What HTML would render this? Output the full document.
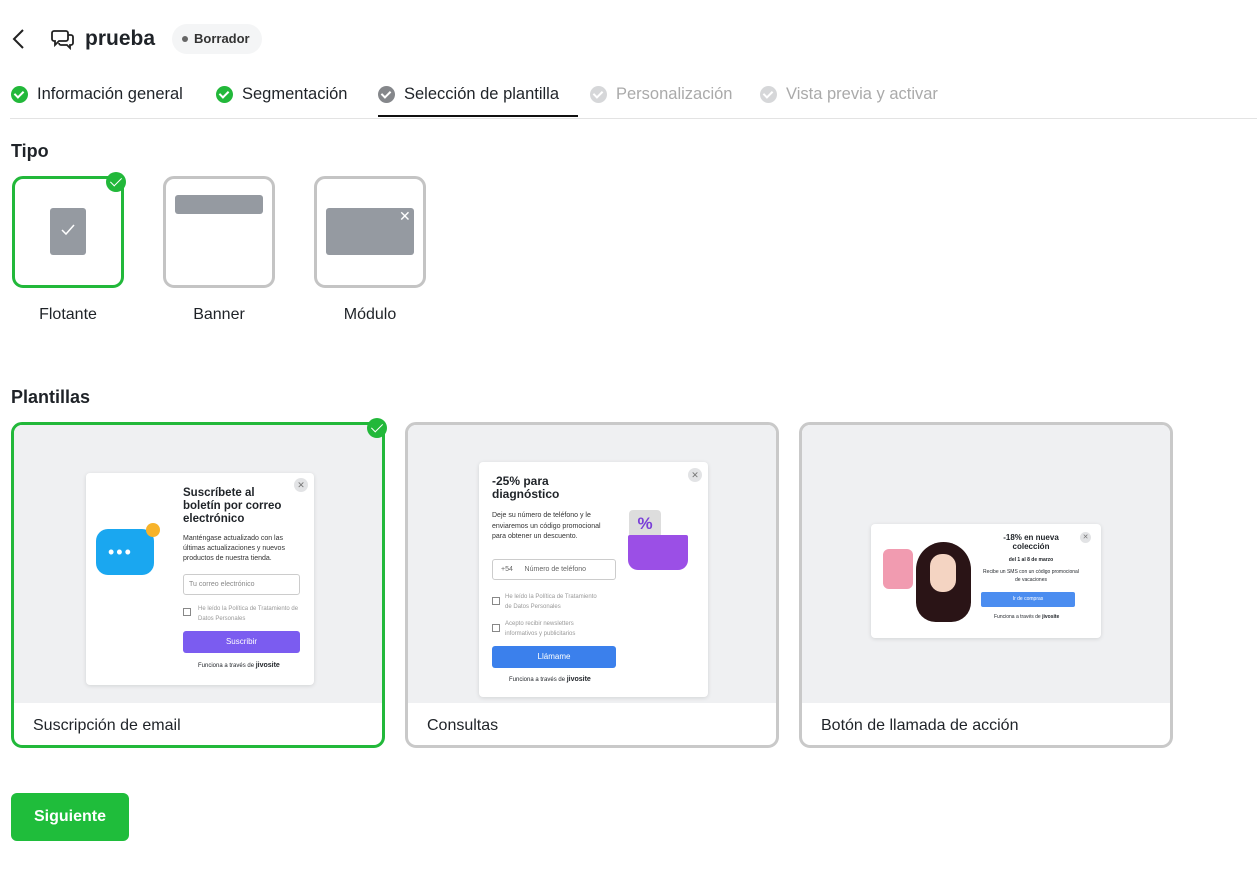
<!DOCTYPE html>
<html><head><meta charset="utf-8"><style>
*{box-sizing:border-box;margin:0;padding:0}
body{width:1257px;height:879px;background:#fff;font-family:"Liberation Sans",sans-serif;color:#1f2328;position:relative;overflow:hidden}
.a{position:absolute}
.tab{position:absolute;top:85px;font-size:16.5px;display:flex;align-items:center;gap:9px;white-space:nowrap}
.ck{width:17px;height:17px;border-radius:50%;display:inline-block;position:relative}
.ck::after{content:"";position:absolute;left:5px;top:3px;width:4px;height:7px;border:solid #fff;border-width:0 2px 2px 0;transform:rotate(45deg)}
.tcard{position:absolute;top:176px;width:112px;height:112px;border:3px solid #c4c4c4;border-radius:11px}
.tl{position:absolute;top:305px;font-size:16px;width:112px;text-align:center}
.pc{position:absolute;top:422px;height:326px;width:374px;border:3px solid #c9c9c9;border-radius:11px;overflow:hidden}
.pc .img{position:absolute;left:0;top:0;right:0;height:278px;background:#eff0f2}
.pc .cap{position:absolute;left:19px;top:292px;font-size:16px}
.pop{position:absolute;background:#fff;border-radius:4px;box-shadow:0 1px 4px rgba(0,0,0,.12)}
.x{position:absolute;width:14px;height:14px;border-radius:50%;background:#e2e3e5;color:#777;font-size:9px;text-align:center;line-height:14px}
.sm{font-size:7px;line-height:10px;color:#333}
.badge{position:absolute;width:20px;height:20px;border-radius:50%;background:#22b83a}
.badge::after{content:"";position:absolute;left:7px;top:3px;width:5px;height:10px;border:solid #fff;border-width:0 1.5px 1.5px 0;transform:rotate(45deg)}
</style></head><body>
<svg class="a" style="left:10px;top:28px" width="16" height="22" viewBox="0 0 16 22"><path d="M13 2 L4 11 L13 20" fill="none" stroke="#222" stroke-width="2"/></svg>
<svg class="a" style="left:51px;top:28px" width="24" height="22" viewBox="0 0 24 22"><path d="M3 3h12a2 2 0 0 1 2 2v6a2 2 0 0 1-2 2H8l-4 4v-4H3a2 2 0 0 1-2-2V5a2 2 0 0 1 2-2z" fill="none" stroke="#222" stroke-width="1.8"/><path d="M17 7h3a2 2 0 0 1 2 2v6a2 2 0 0 1-2 2h-1v3l-3-3h-6a2 2 0 0 1-2-2" fill="none" stroke="#222" stroke-width="1.8"/></svg>
<div class="a" style="left:85px;top:27px;font-size:21px;font-weight:bold">prueba</div>
<div class="a" style="left:172px;top:24px;width:90px;height:30px;border-radius:15px;background:#f4f5f6;font-size:13px;font-weight:bold;color:#333;line-height:30px;padding-left:22px">Borrador<span class="a" style="left:10px;top:12px;width:6px;height:6px;border-radius:50%;background:#666"></span></div>

<div class="tab" style="left:11px"><span class="ck" style="background:#22b83a"></span>Información general</div>
<div class="tab" style="left:216px"><span class="ck" style="background:#22b83a"></span>Segmentación</div>
<div class="tab" style="left:378px"><span class="ck" style="background:#85878b"></span>Selección de plantilla</div>
<div class="tab" style="left:590px;color:#aaa"><span class="ck" style="background:#d6d7d9"></span>Personalización</div>
<div class="tab" style="left:760px;color:#aaa"><span class="ck" style="background:#d6d7d9"></span>Vista previa y activar</div>
<div class="a" style="left:10px;top:118px;width:1247px;height:1px;background:#e3e3e3"></div>
<div class="a" style="left:378px;top:115px;width:200px;height:2px;background:#111"></div>

<div class="a" style="left:11px;top:141px;font-size:18px;font-weight:bold">Tipo</div>
<div class="tcard" style="left:12px;border-color:#22b83a"><div class="a" style="left:35px;top:29px;width:36px;height:47px;background:#959aa1;border-radius:3px"></div><svg class="a" style="left:46px;top:45px" width="14" height="12"><path d="M1 6l4 4 8-9" fill="none" stroke="#fff" stroke-width="1.5"/></svg></div>
<div class="badge" style="left:106px;top:172px"></div>
<div class="tcard" style="left:163px"><div class="a" style="left:9px;top:16px;width:88px;height:19px;background:#959aa1;border-radius:3px"></div></div>
<div class="tcard" style="left:314px"><div class="a" style="left:9px;top:29px;width:88px;height:47px;background:#959aa1;border-radius:3px"></div><div class="a" style="left:82px;top:29px;color:#fff;font-size:14px">✕</div></div>
<div class="tl" style="left:12px;top:306px">Flotante</div>
<div class="tl" style="left:163px;top:306px">Banner</div>
<div class="tl" style="left:314px;top:306px">Módulo</div>

<div class="a" style="left:11px;top:387px;font-size:18px;font-weight:bold">Plantillas</div>

<div class="pc" style="left:11px;border-color:#22b83a"><div class="img">
 <div class="pop" style="left:72px;top:48px;width:228px;height:212px">
  <div class="x" style="left:208px;top:5px">✕</div>
  <div class="a" style="left:10px;top:56px;width:58px;height:46px;border-radius:12px;background:#1aa7f0"></div>
  <div class="a" style="left:60px;top:50px;width:14px;height:14px;border-radius:50%;background:#f7b32a"></div>
  <div class="a" style="left:22px;top:75px;color:#fff;font-size:18px;letter-spacing:2px;line-height:8px">•••</div>
  <div class="a" style="left:97px;top:14px;font-size:11.5px;font-weight:bold;line-height:13px;width:108px">Suscríbete al boletín por correo electrónico</div>
  <div class="a sm" style="left:97px;top:61px;width:122px">Manténgase actualizado con las últimas actualizaciones y nuevos productos de nuestra tienda.</div>
  <div class="a" style="left:97px;top:101px;width:117px;height:21px;border:1px solid #ccc;border-radius:3px;font-size:7px;color:#888;padding:6px 5px">Tu correo electrónico</div>
  <div class="a" style="left:97px;top:135px;width:8px;height:8px;border:1px solid #888"></div>
  <div class="a sm" style="left:112px;top:131px;color:#999;width:110px;font-size:6px;line-height:10px">He leído la Política de Tratamiento de Datos Personales</div>
  <div class="a" style="left:97px;top:158px;width:117px;height:22px;background:#7b5cf0;border-radius:3px;color:#fff;font-size:8px;text-align:center;line-height:22px">Suscribir</div>
  <div class="a" style="left:112px;top:189px;font-size:6px">Funciona a través de <b style="font-size:7px">jivosite</b></div>
 </div></div><div class="cap">Suscripción de email</div></div>
<div class="badge" style="left:367px;top:418px"></div>

<div class="pc" style="left:405px"><div class="img">
 <div class="pop" style="left:71px;top:37px;width:229px;height:235px">
  <div class="x" style="left:209px;top:6px">✕</div>
  <div class="a" style="left:13px;top:13px;font-size:12px;font-weight:bold;line-height:13px">-25% para<br>diagnóstico</div>
  <div class="a sm" style="left:13px;top:49px;width:120px;line-height:10.5px">Deje su número de teléfono y le enviaremos un código promocional para obtener un descuento.</div>
  <div class="a" style="left:150px;top:48px;width:32px;height:28px;background:#ddd;border-radius:4px;color:#7a3fd8;font-weight:bold;font-size:17px;text-align:center;line-height:28px">%</div>
  <div class="a" style="left:149px;top:73px;width:60px;height:35px;background:#9b4fe6;border-radius:2px 2px 10px 10px"></div>
  <div class="a" style="left:13px;top:97px;width:124px;height:21px;border:1px solid #ccc;border-radius:3px;font-size:7px;color:#666;padding:6px 8px">+54 &nbsp;&nbsp;&nbsp;&nbsp; Número de teléfono</div>
  <div class="a" style="left:13px;top:135px;width:8px;height:8px;border:1px solid #888"></div>
  <div class="a sm" style="left:26px;top:130px;color:#999;font-size:6px">He leído la Política de Tratamiento<br>de Datos Personales</div>
  <div class="a" style="left:13px;top:162px;width:8px;height:8px;border:1px solid #888"></div>
  <div class="a sm" style="left:26px;top:157px;color:#999;font-size:6px">Acepto recibir newsletters<br>informativos y publicitarios</div>
  <div class="a" style="left:13px;top:184px;width:124px;height:22px;background:#3b80ec;border-radius:3px;color:#fff;font-size:8px;text-align:center;line-height:22px">Llámame</div>
  <div class="a" style="left:30px;top:214px;font-size:6px">Funciona a través de <b style="font-size:7px">jivosite</b></div>
 </div></div><div class="cap">Consultas</div></div>

<div class="pc" style="left:799px"><div class="img">
 <div class="pop" style="left:69px;top:99px;width:230px;height:114px">
  <div class="x" style="left:209px;top:8px;width:11px;height:11px;line-height:11px;font-size:7px">✕</div>
  <div class="a" style="left:12px;top:25px;width:30px;height:40px;background:#f19bb0;border-radius:6px"></div>
  <div class="a" style="left:45px;top:18px;width:55px;height:80px;background:#2a1416;border-radius:28px 28px 20px 20px"></div>
  <div class="a" style="left:59px;top:30px;width:26px;height:38px;background:#f4d4c2;border-radius:12px"></div>
  <div class="a" style="left:115px;top:9px;width:90px;font-size:8px;font-weight:bold;text-align:center;line-height:9px">-18% en nueva colección</div>
  <div class="a" style="left:110px;top:33px;width:100px;font-size:5px;font-weight:bold;text-align:center">del 1 al 8 de marzo</div>
  <div class="a" style="left:110px;top:44px;width:100px;font-size:5px;text-align:center;line-height:8px">Recibe un SMS con un código promocional de vacaciones</div>
  <div class="a" style="left:110px;top:68px;width:94px;height:15px;background:#4b8df0;border-radius:2px;color:#fff;font-size:5px;text-align:center;line-height:15px">Ir de compras</div>
  <div class="a" style="left:123px;top:90px;font-size:5px">Funciona a través de <b>jivosite</b></div>
 </div></div><div class="cap">Botón de llamada de acción</div></div>

<div class="a" style="left:11px;top:793px;width:118px;height:48px;background:#1fbd3b;border-radius:6px;color:#fff;font-weight:bold;font-size:16px;text-align:center;line-height:48px">Siguiente</div>
</body></html>
